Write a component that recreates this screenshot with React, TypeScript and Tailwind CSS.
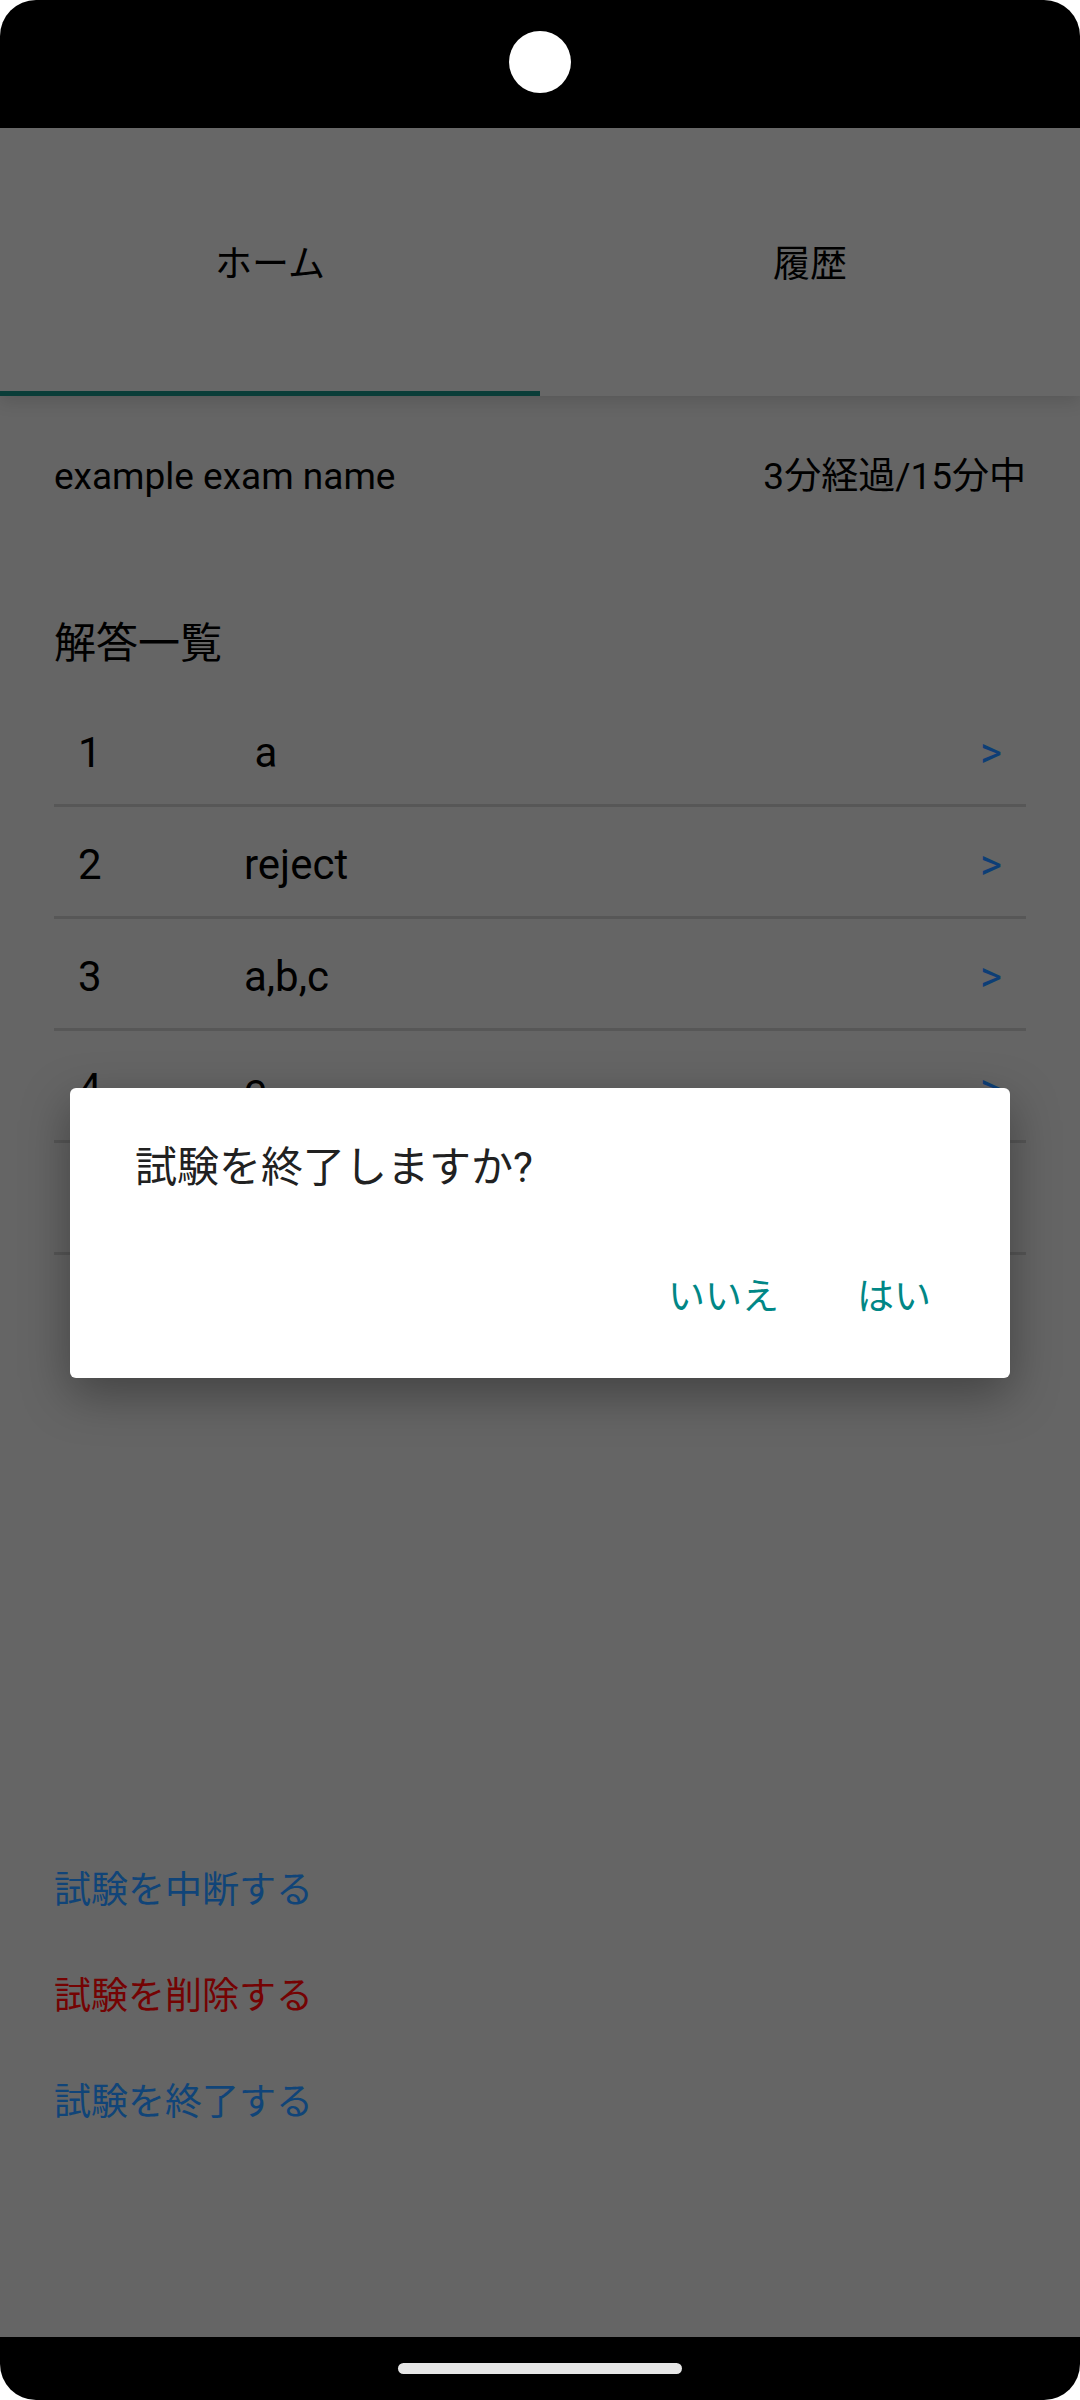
const answers = [
  { no: 1, value: " a" },
  { no: 2, value: "reject" },
  { no: 3, value: "a,b,c" },
  { no: 4, value: "c" },
  { no: 5, value: "b" },
];

function ConfirmDialog() {
  return (
    <div className="absolute inset-0 z-20 flex items-center justify-center">
      <div className="w-[940px] h-[290px] bg-white rounded-[6px] shadow-[0_16px_48px_rgba(0,0,0,0.35)] flex flex-col">
        <div className="pt-[52px] pl-[65px] h-[108px] text-[42px] leading-[56px] text-[#212121]">
          試験を終了しますか?
        </div>
        <div className="mt-[74px] pr-[58px] flex justify-end gap-[36px] text-[37px] leading-[56px] text-[#018786]">
          <button className="px-[21px]">いいえ</button>
          <button className="px-[21px]">はい</button>
        </div>
      </div>
    </div>
  );
}

export default function App() {
  return (
    <div className="w-[1080px] h-[2400px] bg-white font-['Roboto','Noto_Sans_CJK_JP',sans-serif]">
      <div className="h-full rounded-[36px] overflow-hidden bg-black flex flex-col">
        {/* status bar */}
        <div className="h-[128px] shrink-0 flex justify-center">
          <div className="mt-[31px] w-[62px] h-[62px] rounded-full bg-white" />
        </div>

        <div className="flex-1 relative bg-[#656565] flex flex-col">
          {/* tabs */}
          <div className="h-[268px] shrink-0 bg-[#676767] flex relative z-10 shadow-[0_6px_16px_rgba(0,0,0,0.12)] text-[37px] text-black">
            <div className="flex-1 flex items-center justify-center border-b-[5px] border-[#0a3d38] pt-[11px]">ホーム</div>
            <div className="flex-1 flex items-center justify-center border-b-[5px] border-transparent pt-[11px]">履歴</div>
          </div>

          <div className="flex-1 px-[54px] flex flex-col text-black">
            <div className="mt-[51px] h-[60px] flex items-center justify-between text-[37px]">
              <span>example exam name</span>
              <span>3分経過/15分中</span>
            </div>

            <div className="mt-[106px] h-[60px] flex items-center text-[42px]">解答一覧</div>

            <div className="mt-[22px]">
              {answers.map((row) => (
                <div key={row.no} className="h-[112px] pt-[6px] border-b-[3px] border-[#575757] flex items-center text-[42px]">
                  <span className="w-[190px] pl-[24px]">{row.no}</span>
                  <span className="whitespace-pre">{row.value}</span>
                  <span className="ml-auto pr-[24px] text-[#0d3e76]">&gt;</span>
                </div>
              ))}
            </div>

            <div className="flex-1" />

            <div className="pb-[181px] flex flex-col text-[37px]">
              <div className="h-[106px] flex items-center text-[#104478]">試験を中断する</div>
              <div className="h-[106px] flex items-center text-[#740303]">試験を削除する</div>
              <div className="h-[106px] flex items-center text-[#104478]">試験を終了する</div>
            </div>
          </div>

          <ConfirmDialog />
        </div>

        {/* nav bar */}
        <div className="h-[63px] shrink-0 flex justify-center">
          <div className="mt-[26px] w-[284px] h-[11px] rounded-full bg-[#e6e6e6]" />
        </div>
      </div>
    </div>
  );
}
